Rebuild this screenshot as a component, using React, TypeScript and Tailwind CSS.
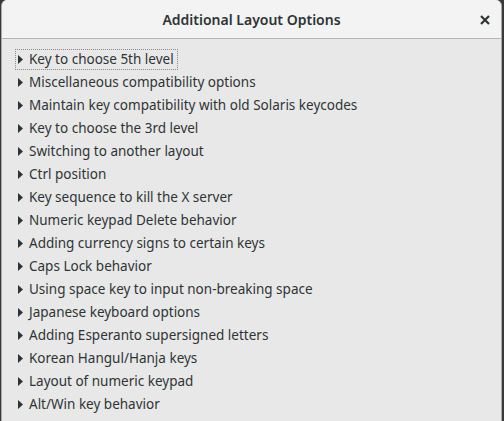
import React from "react";

const items = [
  "Key to choose 5th level",
  "Miscellaneous compatibility options",
  "Maintain key compatibility with old Solaris keycodes",
  "Key to choose the 3rd level",
  "Switching to another layout",
  "Ctrl position",
  "Key sequence to kill the X server",
  "Numeric keypad Delete behavior",
  "Adding currency signs to certain keys",
  "Caps Lock behavior",
  "Using space key to input non-breaking space",
  "Japanese keyboard options",
  "Adding Esperanto supersigned letters",
  "Korean Hangul/Hanja keys",
  "Layout of numeric keypad",
  "Alt/Win key behavior",
];

function Tri() {
  return (
    <svg width="5" height="9" viewBox="0 0 5 9" className="shrink-0">
      <path d="M0 0 L5 4.5 L0 9 Z" fill="#2e3436" />
    </svg>
  );
}

export default function App() {
  return (
    <div className="w-[504px] h-[421px] overflow-hidden bg-[#3a3a3a] flex" style={{ fontFamily: '"Noto Sans", "Open Sans", sans-serif' }}>
      <div className="ml-[1px] w-[501px] h-full flex flex-col rounded-t-[6px] overflow-hidden border-l border-r border-[#a9a9a9] bg-[#e8e8e8]">
        <div className="h-[39px] shrink-0 bg-[#f3f3f3] border-b border-[#b6b6b6] flex items-center relative">
          <div className="w-full text-center text-[14px] font-semibold text-[#2e3436] leading-none pt-[1px]">Additional Layout Options</div>
          <svg width="10" height="10" viewBox="0 0 10 10" className="absolute left-[478px] top-[15px]">
            <path d="M1 1 L9 9 M9 1 L1 9" stroke="#2e3436" strokeWidth="2.2" />
          </svg>
        </div>
        <div className="flex flex-col pt-[9px] pl-[13px]">
          {items.map((t, i) => (
            <div key={t} className="h-[23px] flex items-center">
              <div className={`flex items-center gap-[6px] h-[21px] pl-[2px] pr-[3px] ${i === 0 ? "border border-dotted border-[#8a8a8a]" : "border border-transparent"}`}>
                <Tri />
                <span className="text-[13.5px] text-[#2e3436] leading-none">{t}</span>
              </div>
            </div>
          ))}
        </div>
      </div>
    </div>
  );
}
